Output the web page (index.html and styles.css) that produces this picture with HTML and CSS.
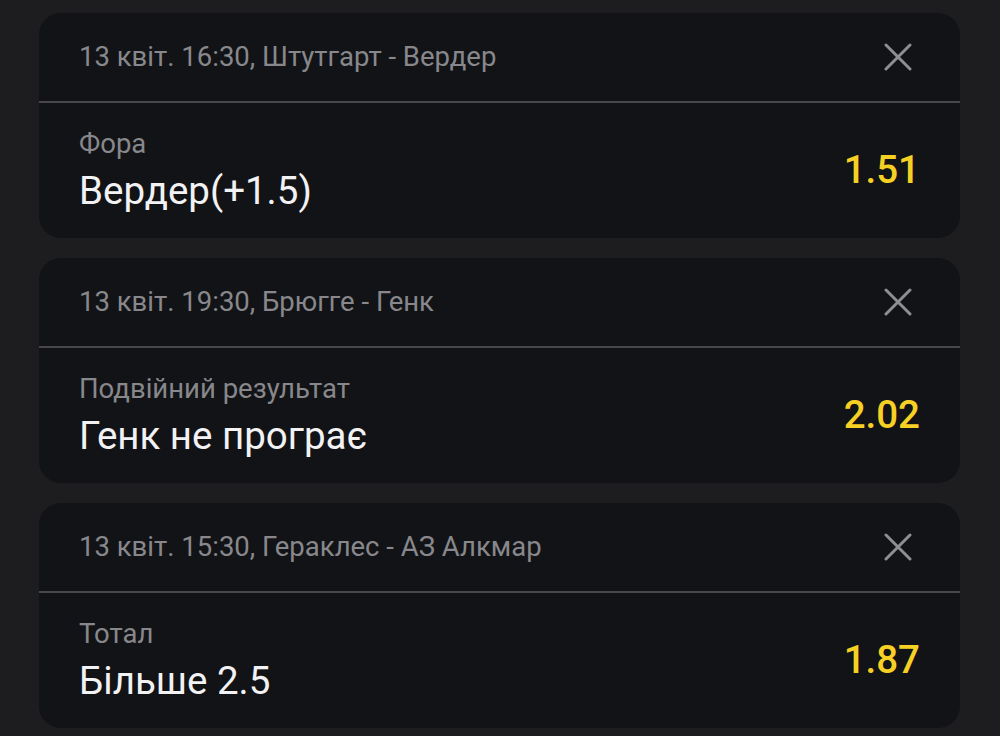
FILE: index.html
```html
<!DOCTYPE html>
<html lang="uk">
<head>
<meta charset="utf-8">
<link rel="stylesheet" href="styles.css">
</head>
<body>
<div class="list">
  <div class="card">
    <div class="head">
      <span class="event">13 квіт. 16:30, Штутгарт - Вердер</span>
      <svg class="close" viewBox="0 0 28 28"><path d="M2 2L26 26M26 2L2 26"/></svg>
    </div>
    <div class="body">
      <div class="info">
        <div class="market">Фора</div>
        <div class="pick">Вердер(+1.5)</div>
      </div>
      <div class="odds">1.51</div>
    </div>
  </div>
  <div class="card">
    <div class="head">
      <span class="event">13 квіт. 19:30, Брюгге - Генк</span>
      <svg class="close" viewBox="0 0 28 28"><path d="M2 2L26 26M26 2L2 26"/></svg>
    </div>
    <div class="body">
      <div class="info">
        <div class="market">Подвійний результат</div>
        <div class="pick">Генк не програє</div>
      </div>
      <div class="odds">2.02</div>
    </div>
  </div>
  <div class="card">
    <div class="head">
      <span class="event">13 квіт. 15:30, Гераклес - АЗ Алкмар</span>
      <svg class="close" viewBox="0 0 28 28"><path d="M2 2L26 26M26 2L2 26"/></svg>
    </div>
    <div class="body">
      <div class="info">
        <div class="market">Тотал</div>
        <div class="pick">Більше 2.5</div>
      </div>
      <div class="odds">1.87</div>
    </div>
  </div>
</div>
</body>
</html>
```
FILE: styles.css
```css
html, body {
  margin: 0;
  padding: 0;
  background: #1d1d1f;
  font-family: Roboto, "Noto Sans", sans-serif;
}
.list {
  display: flex;
  flex-direction: column;
  gap: 20px;
  padding: 13px 40px 0 39px;
}
.card {
  background: #121316;
  border-radius: 22px;
  overflow: hidden;
}
.head {
  height: 88px;
  display: flex;
  align-items: center;
  justify-content: space-between;
  padding: 0 48px 0 40px;
  border-bottom: 2px solid #48484b;
}
.event {
  font-size: 27.5px;
  color: #88888c;
  margin-top: -1px;
}
.close {
  width: 28px;
  height: 28px;
  fill: none;
  stroke: #8e8e93;
  stroke-width: 3;
  stroke-linecap: round;
}
.body {
  height: 135px;
  display: flex;
  align-items: center;
  justify-content: space-between;
  padding: 0 40px;
}
.market {
  font-size: 27.5px;
  color: #88888c;
  line-height: 32px;
}
.pick {
  font-size: 38.5px;
  color: #f2f2f4;
  line-height: 44px;
  margin-top: 9px;
}
.odds {
  font-size: 38.5px;
  font-weight: 500;
  color: #f7d024;
  margin-top: -3px;
}
```
